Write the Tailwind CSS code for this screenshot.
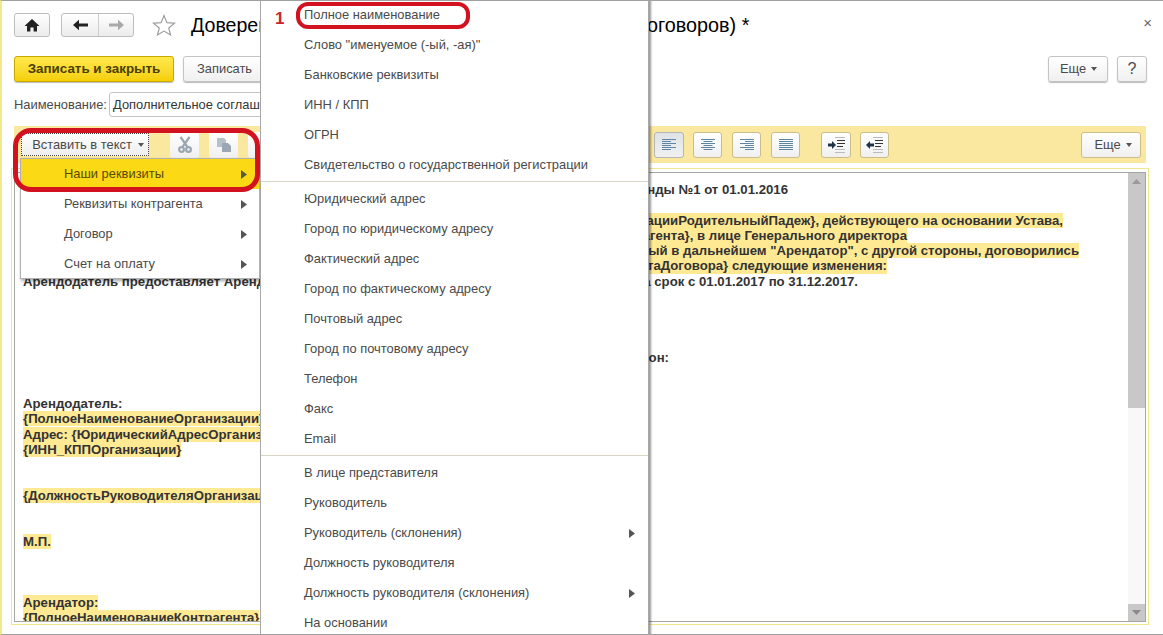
<!DOCTYPE html>
<html lang="ru">
<head>
  <meta charset="UTF-8" />
  <title>Доверенность</title>
  <script src="https://cdn.jsdelivr.net/npm/@tailwindcss/browser@4"></script>
</head>
<body class="bg-white">
  <div class="relative w-[1163px] h-[635px] overflow-hidden bg-white font-['Liberation_Sans',Arial,sans-serif] text-[#4a4a4a] text-[12.9px] border-t border-b border-[#a0a0a0] border-l-2 border-l-[#f3e98a] pl-3">

    <!-- header -->
    <div class="flex items-center h-[24px] mt-3 text-[#222]">
      <button class="flex items-center justify-center w-[36px] h-[24px] border border-[#bdbdbd] rounded-[3px] bg-linear-to-b from-white to-[#ececec]">
        <svg width="16" height="14" viewBox="0 0 16 14"><path d="M8 1 L15.5 8 H13 V13.5 H9.6 V9.5 H6.4 V13.5 H3 V8 H.5 Z" fill="#222"/></svg>
      </button>
      <div class="flex ml-[11px] h-[24px] w-[73px] border border-[#bdbdbd] rounded-[3px] bg-linear-to-b from-white to-[#ececec]">
        <div class="flex items-center justify-center w-[37px] border-r border-[#cfcfcf]">
          <svg width="15" height="12" viewBox="0 0 15 12"><path d="M0 6 L6 .8 V4.4 H15 V7.6 H6 V11.2 Z" fill="#222"/></svg>
        </div>
        <div class="flex items-center justify-center flex-1">
          <svg width="15" height="12" viewBox="0 0 15 12"><path d="M15 6 L9 .8 V4.4 H0 V7.6 H9 V11.2 Z" fill="#a9a9a9"/></svg>
        </div>
      </div>
      <svg class="ml-[18px]" width="24" height="22" viewBox="0 0 24 22"><path d="M12 1.5 L14.9 8.6 L22.6 9.1 L16.7 14 L18.6 21 L12 17.1 L5.4 21 L7.3 14 L1.4 9.1 L9.1 8.6 Z" fill="none" stroke="#9a9a9a" stroke-width="1.1"/></svg>
      <span class="ml-[15px] pt-[2px] text-[19.6px] text-black whitespace-nowrap w-[456px]">Доверенность</span>
      <span class="pt-[2px] text-[19.8px] text-black whitespace-nowrap">оговоров) *</span>
      <span class="ml-auto mr-[11px] mb-[6px] text-[#666] text-[15px] leading-none">×</span>
    </div>

    <!-- command bar -->
    <div class="flex items-center h-[26px] mt-[19px]">
      <button class="w-[160px] h-[26px] rounded-[3px] border border-[#c9a800] bg-linear-to-b from-[#ffe94a] to-[#f5cf00] font-bold text-[#4a3f00] text-[13.4px] shadow-[0_1px_1px_#bbb]">Записать и закрыть</button>
      <button class="ml-[9px] w-[90px] h-[26px] pl-[13px] text-left rounded-[3px] border border-[#c4c4c4] bg-linear-to-b from-white to-[#f0f0f0] text-[#4a4a4a] shadow-[0_1px_1px_#bbb]">Записать</button>
      <button class="flex items-center justify-center gap-[5px] ml-auto w-[60px] h-[26px] pl-[1px] rounded-[3px] border border-[#c4c4c4] bg-linear-to-b from-white to-[#f0f0f0] shadow-[0_1px_1px_#bbb]">Еще
        <svg width="6" height="4" viewBox="0 0 6 4"><path d="M0 0H6L3 4Z" fill="#555"/></svg>
      </button>
      <button class="ml-[9px] mr-[16px] w-[30px] h-[26px] rounded-[3px] border border-[#c4c4c4] bg-linear-to-b from-white to-[#f0f0f0] text-[16px] shadow-[0_1px_1px_#bbb]">?</button>
    </div>

    <!-- name field -->
    <div class="flex items-center h-[25px] mt-[10px]">
      <span class="w-[95px] pt-[1px] whitespace-nowrap">Наименование:</span>
      <div class="flex items-center w-[400px] h-[25px] px-[3px] pt-[1px] border border-[#c4c4c4] rounded-[3px] text-[#333] whitespace-nowrap overflow-hidden">Дополнительное соглашение</div>
    </div>

    <!-- toolbar -->
    <div class="flex items-center h-[37px] w-[1132px] mt-[9px] pl-[7px] bg-[#fbe8a0]">
      <button class="flex items-center justify-center gap-[6px] w-[128px] h-[23px] pl-[6px] border border-dotted border-[#444] bg-linear-to-b from-white to-[#eeeeee]">Вставить в текст
        <svg width="6" height="4" viewBox="0 0 6 4"><path d="M0 0H6L3 4Z" fill="#555"/></svg>
      </button>
      <button class="flex items-center justify-center ml-[21px] w-[29px] h-[26px] rounded-[3px] bg-linear-to-b from-white to-[#f0f0f0]">
        <svg width="14" height="17" viewBox="0 0 14 17" fill="none" stroke="#9aa7b3" stroke-width="2.2"><path d="M2.5 1 L9.5 11 M11.5 1 L4.5 11"/><circle cx="3.5" cy="13.5" r="2.4"/><circle cx="10.5" cy="13.5" r="2.4"/></svg>
      </button>
      <button class="flex items-center justify-center ml-[10px] w-[29px] h-[26px] rounded-[3px] bg-linear-to-b from-white to-[#f0f0f0]">
        <svg width="16" height="16" viewBox="0 0 16 16"><path d="M1 1H8L10 3V10H1Z" fill="#b6c0c9"/><path d="M6 6H12L15 9V15H6Z" fill="#9ba8b4"/></svg>
      </button>
      <button class="ml-[10px] w-[29px] h-[26px] rounded-[3px] bg-linear-to-b from-white to-[#f0f0f0]"></button>

      <button class="flex items-center justify-center ml-[377px] w-[30px] h-[26px] rounded-[3px] border border-[#b5b5b5] bg-linear-to-b from-[#dfe3e6] to-[#f0f0f0]">
        <svg width="14" height="12" viewBox="0 0 14 12" stroke="#5e86a8"><path d="M0 .5H14M0 2.5H9M0 4.5H14M0 6.5H9M0 8.5H14M0 10.5H9"/></svg>
      </button>
      <button class="flex items-center justify-center ml-[9px] w-[29px] h-[26px] rounded-[3px] border border-[#c9bd8a] bg-linear-to-b from-white to-[#f0f0f0]">
        <svg width="14" height="12" viewBox="0 0 14 12" stroke="#5e86a0"><path d="M0 .5H14M2.5 2.5H11.5M0 4.5H14M2.5 6.5H11.5M0 8.5H14M2.5 10.5H11.5"/></svg>
      </button>
      <button class="flex items-center justify-center ml-[10px] w-[29px] h-[26px] rounded-[3px] border border-[#c9bd8a] bg-linear-to-b from-white to-[#f0f0f0]">
        <svg width="14" height="12" viewBox="0 0 14 12" stroke="#5e86a0"><path d="M0 .5H14M5 2.5H14M0 4.5H14M5 6.5H14M0 8.5H14M5 10.5H14"/></svg>
      </button>
      <button class="flex items-center justify-center ml-[10px] w-[29px] h-[26px] rounded-[3px] border border-[#c9bd8a] bg-linear-to-b from-white to-[#f0f0f0]">
        <svg width="14" height="12" viewBox="0 0 14 12" stroke="#5e86a0"><path d="M0 .5H14M0 2.5H14M0 4.5H14M0 6.5H14M0 8.5H14M0 10.5H14"/></svg>
      </button>
      <button class="flex items-center justify-center ml-[21px] w-[30px] h-[26px] rounded-[3px] border border-[#c9bd8a] bg-linear-to-b from-white to-[#f0f0f0]">
        <svg width="17" height="16" viewBox="0 0 17 16"><path d="M0 6.6H4V4L8 8L4 12V9.4H0Z" fill="#1f3347"/><path d="M9 3.5H17M9 6.5H17M9 9.5H15" stroke="#333"/><path d="M7 .5H17M7 12.5H17M7 15.5H17" stroke="#bbb"/></svg>
      </button>
      <button class="flex items-center justify-center ml-[9px] w-[29px] h-[26px] rounded-[3px] border border-[#c9bd8a] bg-linear-to-b from-white to-[#f0f0f0]">
        <svg width="17" height="16" viewBox="0 0 17 16"><path d="M8 6.6H4V4L0 8L4 12V9.4H8Z" fill="#1f3347"/><path d="M9 3.5H17M9 6.5H17M9 9.5H15" stroke="#333"/><path d="M7 .5H17M7 12.5H17M7 15.5H17" stroke="#bbb"/></svg>
      </button>
      <button class="flex items-center justify-center gap-[5px] ml-[192px] w-[60px] h-[26px] pl-[4px] rounded-[3px] border border-[#c9bd8a] bg-linear-to-b from-white to-[#f0f0f0]">Еще
        <svg width="6" height="4" viewBox="0 0 6 4"><path d="M0 0H6L3 4Z" fill="#555"/></svg>
      </button>
    </div>

    <!-- editor -->
    <div class="w-[1138px] h-[457px] -ml-[3px] mt-[5px] pt-[3px] px-[2px] pb-[2px] border border-[#f0e88e]">
      <div class="flex h-[450px] border border-[#a5a8a0]">
        <div class="flex-1 pt-[9px] pl-[8px] overflow-hidden font-bold text-[#333] text-[13.2px] leading-[15.3px] whitespace-nowrap">
          <div class="flex justify-end h-[15.3px] w-[765px]"><span>Дополнительное соглашение к договору аренды №1 от 01.01.2016</span></div>
          <div class="h-[15.3px]"></div>
          <div class="flex justify-end h-[15.3px] w-[1040px]"><span class="bg-[#ffe993]">{НаименованиеОрганизацииРодительныйПадеж}, действующего на основании Устава,</span></div>
          <div class="flex justify-end h-[15.3px] w-[884px]"><span class="bg-[#ffe993]">{Контрагента}, в лице Генерального директора</span></div>
          <div class="flex justify-end h-[15.3px] w-[1056px]"><span class="bg-[#ffe993]">именуемый в дальнейшем "Арендатор", с другой стороны, договорились</span></div>
          <div class="flex justify-end h-[15.3px] w-[864px]"><span class="bg-[#ffe993]">{ДатаДоговора} следующие изменения:</span></div>
          <div class="flex justify-between h-[15.3px] w-[835px]"><span>Арендодатель предоставляет Арендатору</span><span>на срок с 01.01.2017 по 31.12.2017.</span></div>
          <div class="h-[61.2px]"></div>
          <div class="flex justify-end h-[15.3px] w-[646px]"><span>Подписи сторон:</span></div>
          <div class="h-[30.6px]"></div>
          <div class="h-[15.3px]">Арендодатель:</div>
          <div class="h-[15.3px]"><span class="bg-[#ffe993]">{ПолноеНаименованиеОрганизации}</span></div>
          <div class="h-[15.3px]"><span class="bg-[#ffe993]">Адрес: {ЮридическийАдресОрганизации}</span></div>
          <div class="h-[15.3px]"><span class="bg-[#ffe993]">{ИНН_КППОрганизации}</span></div>
          <div class="h-[30.6px]"></div>
          <div class="h-[15.3px]"><span class="bg-[#ffe993]">{ДолжностьРуководителяОрганизации}</span></div>
          <div class="h-[30.6px]"></div>
          <div class="h-[15.3px]"><span class="bg-[#ffe993]">М.П.</span></div>
          <div class="h-[45.9px]"></div>
          <div class="h-[15.3px]"><span class="bg-[#ffe993]">Арендатор:</span></div>
          <div class="h-[15.3px]"><span class="bg-[#ffe993]">{ПолноеНаименованиеКонтрагента}</span></div>
        </div>
        <div class="flex flex-col w-[17px] bg-[#f8f8f8]">
          <div class="flex justify-center pt-[6px] h-[235px] bg-[#c8c8c8]">
            <svg width="9" height="5" viewBox="0 0 9 5"><path d="M0 5H9L4.5 0Z" fill="#9a9a9a"/></svg>
          </div>
          <div class="flex-1"></div>
          <div class="flex items-center justify-center h-[17px] bg-[#c8c8c8]">
            <svg width="9" height="5" viewBox="0 0 9 5"><path d="M0 0H9L4.5 5Z" fill="#8a8a8a"/></svg>
          </div>
        </div>
      </div>
    </div>

    <!-- first level menu -->
    <div class="absolute left-[18px] top-[157px] w-[240px] h-[121px] bg-white border border-[#b0b0b0] shadow-[1px_2px_3px_rgba(0,0,0,.35)] text-[#4a4a4a]">
      <div class="flex items-center justify-between h-[30px] pl-[43px] pr-[12px] bg-[#fbd914] text-[#5a4a00]">Наши реквизиты
        <svg width="6" height="9" viewBox="0 0 6 9"><path d="M0 0L6 4.5L0 9Z" fill="#5a5a3a"/></svg>
      </div>
      <div class="flex items-center justify-between h-[30px] pl-[43px] pr-[12px]">Реквизиты контрагента
        <svg width="6" height="9" viewBox="0 0 6 9"><path d="M0 0L6 4.5L0 9Z" fill="#555"/></svg>
      </div>
      <div class="flex items-center justify-between h-[30px] pl-[43px] pr-[12px]">Договор
        <svg width="6" height="9" viewBox="0 0 6 9"><path d="M0 0L6 4.5L0 9Z" fill="#555"/></svg>
      </div>
      <div class="flex items-center justify-between h-[30px] pl-[43px] pr-[12px]">Счет на оплату
        <svg width="6" height="9" viewBox="0 0 6 9"><path d="M0 0L6 4.5L0 9Z" fill="#555"/></svg>
      </div>
    </div>

    <!-- second level menu -->
    <div class="absolute left-[258px] -top-px w-[389px] h-[640px] bg-white border-l border-r border-[#a8a8a8] shadow-[2px_0_2px_rgba(0,0,0,.4)] text-[#4a4a4a]">
      <div class="flex items-center h-[30px] pl-[43px]">Полное наименование</div>
      <div class="flex items-center h-[30px] pl-[43px]">Слово "именуемое (-ый, -ая)"</div>
      <div class="flex items-center h-[30px] pl-[43px]">Банковские реквизиты</div>
      <div class="flex items-center h-[30px] pl-[43px]">ИНН / КПП</div>
      <div class="flex items-center h-[30px] pl-[43px]">ОГРН</div>
      <div class="flex items-center h-[30px] pl-[43px]">Свидетельство о государственной регистрации</div>
      <div class="h-px mt-[1px] mb-[2px] bg-[#d8d5c8]"></div>
      <div class="flex items-center h-[30px] pl-[43px]">Юридический адрес</div>
      <div class="flex items-center h-[30px] pl-[43px]">Город по юридическому адресу</div>
      <div class="flex items-center h-[30px] pl-[43px]">Фактический адрес</div>
      <div class="flex items-center h-[30px] pl-[43px]">Город по фактическому адресу</div>
      <div class="flex items-center h-[30px] pl-[43px]">Почтовый адрес</div>
      <div class="flex items-center h-[30px] pl-[43px]">Город по почтовому адресу</div>
      <div class="flex items-center h-[30px] pl-[43px]">Телефон</div>
      <div class="flex items-center h-[30px] pl-[43px]">Факс</div>
      <div class="flex items-center h-[30px] pl-[43px]">Email</div>
      <div class="h-px mt-[1px] mb-[2px] bg-[#d8d5c8]"></div>
      <div class="flex items-center h-[30px] pl-[43px]">В лице представителя</div>
      <div class="flex items-center h-[30px] pl-[43px]">Руководитель</div>
      <div class="flex items-center justify-between h-[30px] pl-[43px] pr-[13px]">Руководитель (склонения)
        <svg width="6" height="9" viewBox="0 0 6 9"><path d="M0 0L6 4.5L0 9Z" fill="#555"/></svg>
      </div>
      <div class="flex items-center h-[30px] pl-[43px]">Должность руководителя</div>
      <div class="flex items-center justify-between h-[30px] pl-[43px] pr-[13px]">Должность руководителя (склонения)
        <svg width="6" height="9" viewBox="0 0 6 9"><path d="M0 0L6 4.5L0 9Z" fill="#555"/></svg>
      </div>
      <div class="flex items-center h-[30px] pl-[43px]">На основании</div>
    </div>

    <!-- red annotations -->
    <span class="absolute left-[273px] top-[5px] font-bold text-[17px] text-[#c9252d]">1</span>
    <div class="absolute left-[294px] top-[1px] w-[174px] h-[27px] rounded-[12px] border-4 border-[#d3121f]"></div>
    <div class="absolute left-[11px] top-[127px] w-[247px] h-[64px] rounded-[18px] border-[5px] border-[#d3121f]"></div>
  </div>
</body>
</html>
